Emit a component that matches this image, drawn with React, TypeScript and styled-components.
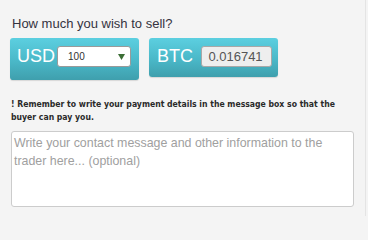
import React from 'react';
import styled, { createGlobalStyle } from 'styled-components';

const GlobalStyle = createGlobalStyle`
  html, body {
    margin: 0;
    padding: 0;
    height: 216px;
    overflow: hidden;
    background: #f4f4f4;
  }
  body {
    font-family: "Liberation Sans", Arial, sans-serif;
  }
`;

const Panel = styled.div`
  width: 366px;
  height: 216px;
  box-sizing: border-box;
  padding: 0 0 0 11px;
  border-right: 1px solid #e4e4e4;
  background: #f4f4f4;
  overflow: hidden;
`;

const Title = styled.div`
  padding-top: 16px;
  padding-left: 1px;
  font-size: 13px;
  line-height: 15px;
  color: #353340;
`;

const Converter = styled.div`
  display: flex;
  align-items: flex-start;
  gap: 10px;
  margin: 7px 0 0 -1px;
`;

const CurrencyBox = styled.div<{ $height: number; $padLeft: number }>`
  display: flex;
  align-items: flex-start;
  box-sizing: border-box;
  width: 129px;
  height: ${(p) => p.$height}px;
  padding: 8px 8px 0 ${(p) => p.$padLeft}px;
  border-radius: 3px;
  background: linear-gradient(to bottom, #5ccfe0 0%, #4ab8c8 55%, #3f9fad 100%);
  box-shadow: 0 1px 1px rgba(0, 0, 0, 0.12);
`;

const CurrencyLabel = styled.span`
  font-size: 18px;
  line-height: 21px;
  color: #ffffff;
  margin-right: 2px;
`;

const SelectWrap = styled.div`
  position: relative;
  width: 75px;
  height: 21px;
`;

const Select = styled.select`
  appearance: none;
  -webkit-appearance: none;
  box-sizing: border-box;
  width: 100%;
  height: 100%;
  margin: 0;
  padding: 0 0 0 10px;
  border: 1px solid #9a9a9a;
  border-radius: 3px;
  background: #ffffff;
  font-family: "Liberation Sans", Arial, sans-serif;
  font-size: 10px;
  color: #333;
  outline: none;
`;

const Arrow = styled.svg`
  position: absolute;
  right: 6px;
  top: 8px;
  pointer-events: none;
`;

const AmountInput = styled.input`
  box-sizing: border-box;
  width: 71px;
  height: 21px;
  margin: 0 0 0 6px;
  padding: 0 2px 0 0;
  border: 1px solid #a8a8a8;
  border-radius: 3px;
  background: #eeeeee;
  font-family: "Liberation Sans", Arial, sans-serif;
  font-size: 13px;
  color: #555;
  text-align: center;
  outline: none;
`;

const Notice = styled.p`
  margin: 18px 0 0 0;
  width: 330px;
  font-family: "DejaVu Sans Condensed", "DejaVu Sans", sans-serif;
  font-stretch: condensed;
  font-size: 8.6px;
  font-weight: bold;
  line-height: 13px;
  color: #2a2a2a;
`;

const MessageBox = styled.textarea`
  display: block;
  box-sizing: border-box;
  width: 343px;
  height: 76px;
  margin: 7px 0 0 0;
  padding: 2px 2px;
  border: 1px solid #cccccc;
  border-radius: 3px;
  background: #ffffff;
  font-family: "Liberation Sans", Arial, sans-serif;
  font-size: 12.4px;
  line-height: 18px;
  color: #555;
  resize: none;
  outline: none;
  &::placeholder {
    color: #a0a0a0;
  }
`;

const App = () => (
  <>
    <GlobalStyle />
    <Panel>
      <Title>How much you wish to sell?</Title>
      <Converter>
        <CurrencyBox $height={42} $padLeft={7}>
          <CurrencyLabel>USD</CurrencyLabel>
          <SelectWrap>
            <Select defaultValue="100">
              <option value="100">100</option>
              <option value="200">200</option>
              <option value="500">500</option>
            </Select>
            <Arrow width="7" height="6" viewBox="0 0 7 6">
              <path d="M0 0 H7 L3.5 6 Z" fill="#3b6e35" />
            </Arrow>
          </SelectWrap>
        </CurrencyBox>
        <CurrencyBox $height={39} $padLeft={8}>
          <CurrencyLabel>BTC</CurrencyLabel>
          <AmountInput defaultValue="0.016741" />
        </CurrencyBox>
      </Converter>
      <Notice>
        ! Remember to write your payment details in the message box so that the buyer can pay you.
      </Notice>
      <MessageBox placeholder="Write your contact message and other information to the trader here... (optional)" />
    </Panel>
  </>
);

export default App;
